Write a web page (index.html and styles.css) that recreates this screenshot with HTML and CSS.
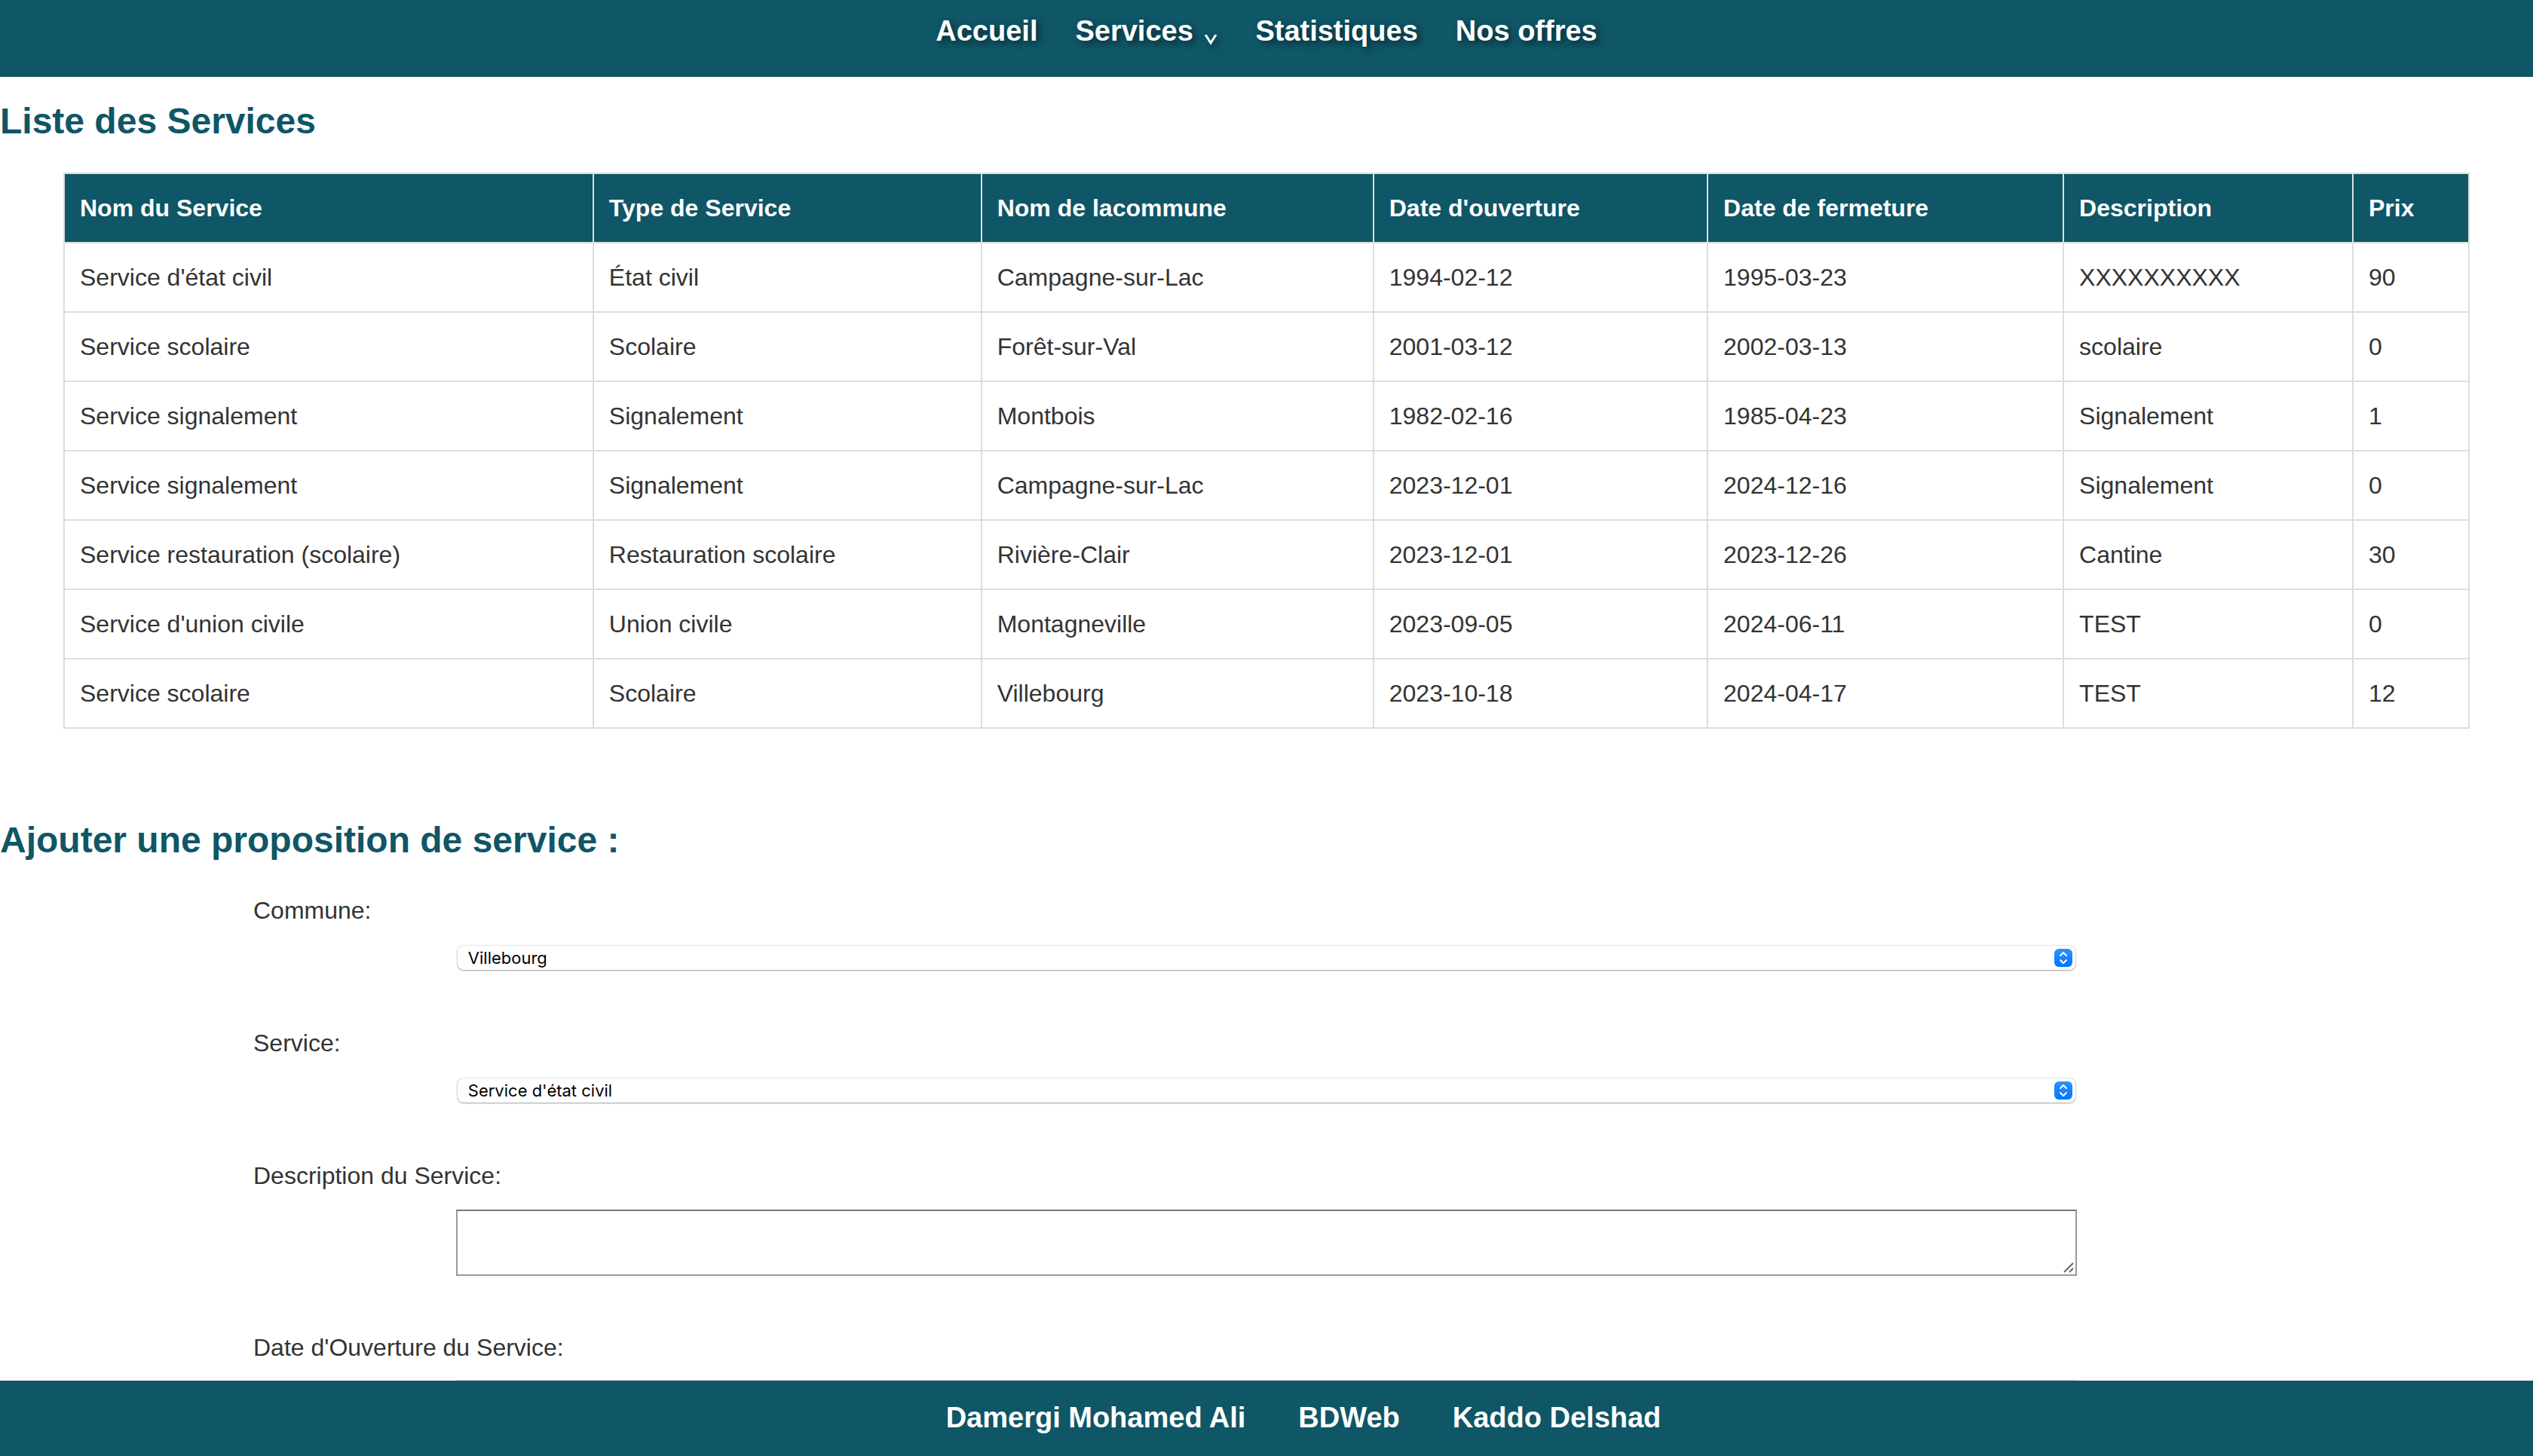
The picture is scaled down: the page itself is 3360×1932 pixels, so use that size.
FILE: index.html
```html
<!DOCTYPE html>
<html lang="fr">
<head>
<meta charset="utf-8">
<title>Liste des Services</title>
<link rel="stylesheet" href="styles.css">
</head>
<body>
<header class="site-header">
  <nav class="menu">
    <a class="menu-link" href="#">Accueil</a>
    <a class="menu-link" href="#">Services <svg class="chevron" viewBox="0 0 18 14" aria-hidden="true"><path d="M2 0 L9 11 L16 0" fill="none" stroke="currentColor" stroke-width="3"/></svg></a>
    <a class="menu-link" href="#">Statistiques</a>
    <a class="menu-link" href="#">Nos offres</a>
  </nav>
</header>
<main>
  <h1 class="title">Liste des Services</h1>
  <table class="services">
    <thead>
      <tr><th>Nom du Service</th><th>Type de Service</th><th>Nom de lacommune</th><th>Date d'ouverture</th><th>Date de fermeture</th><th>Description</th><th>Prix</th></tr>
    </thead>
    <tbody>
      <tr><td>Service d'état civil</td><td>État civil</td><td>Campagne-sur-Lac</td><td>1994-02-12</td><td>1995-03-23</td><td>XXXXXXXXXX</td><td>90</td></tr>
      <tr><td>Service scolaire</td><td>Scolaire</td><td>Forêt-sur-Val</td><td>2001-03-12</td><td>2002-03-13</td><td>scolaire</td><td>0</td></tr>
      <tr><td>Service signalement</td><td>Signalement</td><td>Montbois</td><td>1982-02-16</td><td>1985-04-23</td><td>Signalement</td><td>1</td></tr>
      <tr><td>Service signalement</td><td>Signalement</td><td>Campagne-sur-Lac</td><td>2023-12-01</td><td>2024-12-16</td><td>Signalement</td><td>0</td></tr>
      <tr><td>Service restauration (scolaire)</td><td>Restauration scolaire</td><td>Rivière-Clair</td><td>2023-12-01</td><td>2023-12-26</td><td>Cantine</td><td>30</td></tr>
      <tr><td>Service d'union civile</td><td>Union civile</td><td>Montagneville</td><td>2023-09-05</td><td>2024-06-11</td><td>TEST</td><td>0</td></tr>
      <tr><td>Service scolaire</td><td>Scolaire</td><td>Villebourg</td><td>2023-10-18</td><td>2024-04-17</td><td>TEST</td><td>12</td></tr>
    </tbody>
  </table>
  <h2 class="title">Ajouter une proposition de service :</h2>
  <form class="proposal">
    <label class="label" for="commune">Commune:</label>
    <div class="picker">
      <select class="select" id="commune"><option>Villebourg</option></select>
      <svg class="stepper" viewBox="0 0 24 24" aria-hidden="true"><use href="#arrows"/></svg>
    </div>
    <label class="label" for="service">Service:</label>
    <div class="picker">
      <select class="select" id="service"><option>Service d'état civil</option></select>
      <svg class="stepper" viewBox="0 0 24 24" aria-hidden="true"><use href="#arrows"/></svg>
    </div>
    <label class="label" for="description">Description du Service:</label>
    <div class="area">
      <textarea class="textarea" id="description"></textarea>
      <svg class="grip" viewBox="0 0 14 14" aria-hidden="true"><path d="M1 13 L13 1 M8 13 L13 8" stroke="#666" stroke-width="2" fill="none"/></svg>
    </div>
    <label class="label" for="ouverture">Date d'Ouverture du Service:</label>
    <input class="date" id="ouverture" type="date">
  </form>
</main>
<footer class="site-footer">
  <span>Damergi Mohamed Ali</span>
  <span>BDWeb</span>
  <span>Kaddo Delshad</span>
</footer>
<svg class="symbols" aria-hidden="true">
  <defs>
    <linearGradient id="blue" x1="0" y1="0" x2="0" y2="1"><stop offset="0" stop-color="#2c93ff"/><stop offset="1" stop-color="#0076fe"/></linearGradient>
    <symbol id="arrows" viewBox="0 0 24 24">
      <rect width="24" height="24" rx="6" fill="url(#blue)"/>
      <path d="M8 9 L12 5 L16 9 M8 15 L12 19 L16 15" fill="none" stroke="#fff" stroke-width="2" stroke-linecap="round" stroke-linejoin="round"/>
    </symbol>
  </defs>
</svg>
</body>
</html>
```
FILE: styles.css
```css
* {
  box-sizing: border-box;
}

html {
  overflow: hidden;
}

body {
  margin: 0;
  background: #fff;
  color: #333;
  font-family: "Liberation Sans", Arial, sans-serif;
  font-size: 32px;
  line-height: 50px;
}

.site-header {
  background: #0f5666;
  padding: 16px 0 36px;
}

.menu {
  display: flex;
  justify-content: center;
  gap: 50px;
}

.menu-link {
  color: #fff;
  font-size: 38px;
  font-weight: bold;
  text-decoration: none;
  text-shadow: 4px 4px 8px rgba(0, 0, 0, 0.5);
}

.chevron {
  width: 18px;
  height: 14px;
  margin: 0 0 -6px 4px;
  filter: drop-shadow(4px 4px 4px rgba(0, 0, 0, 0.5));
}

.title {
  margin: 32px 0 41px;
  color: #0f5666;
  font-size: 48px;
  line-height: 54px;
}

.services {
  width: 95%;
  margin: 0 auto 121px;
  border-collapse: collapse;
}

.services th,
.services td {
  padding: 20px;
  border: 2px solid #ddd;
  text-align: left;
}

.services th {
  background: #0f5666;
  color: #fff;
}

.proposal {
  width: 80%;
  margin: 0 auto;
}

.label {
  display: block;
}

.picker,
.area {
  position: relative;
  width: 80%;
  margin: 20px auto 72px;
}

.area {
  margin-bottom: 70px;
}

.picker {
  padding: 2px 2px 0;
}

.select {
  display: block;
  appearance: none;
  width: 100%;
  height: 32px;
  padding: 0 14px;
  border: 0;
  border-radius: 8px;
  background: #fff;
  color: #000;
  box-shadow: 0 0 2px rgba(0, 0, 0, 0.3), 0 1px 2px rgba(0, 0, 0, 0.3);
  font-family: Inter, sans-serif;
  font-size: 22px;
  line-height: 32px;
}

.stepper {
  position: absolute;
  top: 6px;
  right: 6px;
  width: 24px;
  height: 24px;
}

.textarea {
  display: block;
  width: 100%;
  height: 88px;
  border: 2px solid #999;
  border-top-color: #767676;
  border-radius: 0;
  background: #fff;
  resize: none;
}

.grip {
  position: absolute;
  right: 4px;
  bottom: 4px;
  width: 14px;
  height: 14px;
}

.date {
  display: block;
  width: 80%;
  height: 42px;
  margin: 18px auto;
  border: 2px solid #ddd;
}

.site-footer {
  position: fixed;
  right: 0;
  bottom: 0;
  left: 0;
  display: flex;
  justify-content: center;
  gap: 70px;
  padding: 24px 0 26px 98px;
  background: #0f5666;
  color: #fff;
  font-size: 38px;
  font-weight: bold;
}

.symbols {
  position: absolute;
  width: 0;
  height: 0;
}
```
